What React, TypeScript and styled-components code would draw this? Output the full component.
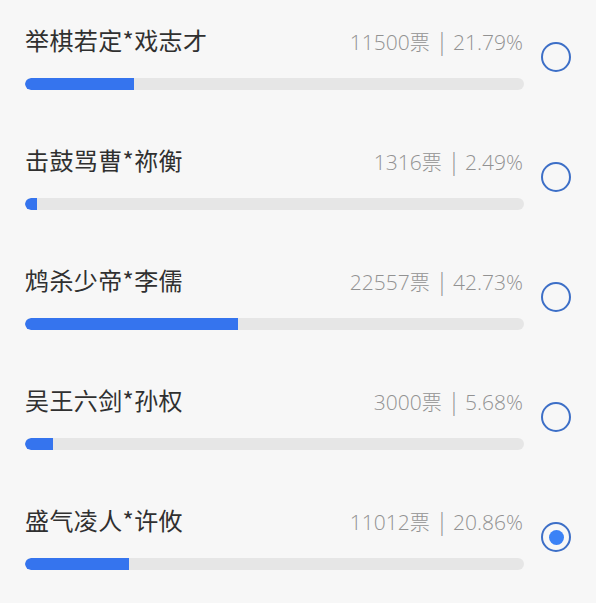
import React from "react"
import styled, { createGlobalStyle } from "styled-components"

const GlobalStyle = createGlobalStyle`
  html, body {
    margin: 0;
    padding: 0;
    background: #ffffff;
  }
`

type Option = {
  name: string
  votes: number
  percent: string
  selected?: boolean
}

const options: Option[] = [
  { name: "举棋若定*戏志才", votes: 11500, percent: "21.79" },
  { name: "击鼓骂曹*祢衡", votes: 1316, percent: "2.49" },
  { name: "鸩杀少帝*李儒", votes: 22557, percent: "42.73" },
  { name: "吴王六剑*孙权", votes: 3000, percent: "5.68" },
  { name: "盛气凌人*许攸", votes: 11012, percent: "20.86", selected: true },
]

const Panel = styled.div`
  width: 596px;
  height: 603px;
  background: #f7f7f7;
  font-family: "Noto Sans CJK SC", "Noto Sans", sans-serif;
  overflow: hidden;
`

const Row = styled.div`
  display: flex;
  align-items: center;
  height: 120px;
  box-sizing: border-box;
  padding: 24px 0 30px 25px;
`

const Body = styled.div`
  width: 499px;
  display: flex;
  flex-direction: column;
`

const Header = styled.div`
  display: flex;
  justify-content: space-between;
  align-items: baseline;
  height: 32px;
`

const Title = styled.div`
  font-size: 24px;
  line-height: 32px;
  color: #303030;
  letter-spacing: 0.4px;
`

const Stats = styled.div`
  display: flex;
  align-items: baseline;
  font-family: "Open Sans", "Noto Sans CJK SC", sans-serif;
  font-size: 21px;
  line-height: 32px;
  color: #929292;
  font-weight: 300;
  margin-right: 1px;
`

const Unit = styled.span`
  font-family: "Noto Sans CJK SC", sans-serif;
  font-size: 20px;
`

const Divider = styled.span`
  margin: 0 5px 0 6px;
  font-size: 23px;
`

const Track = styled.div`
  margin-top: 22px;
  height: 12px;
  border-radius: 6px;
  background: #e6e6e6;
  overflow: hidden;
`

const Fill = styled.div`
  height: 100%;
  background: #3574ee;
  border-radius: 6px 0 0 6px;
`

const Radio = styled.div<{ $checked?: boolean }>`
  margin-left: 17px;
  width: 30px;
  height: 30px;
  box-sizing: border-box;
  border: 2px solid #3d6fc7;
  border-radius: 50%;
  display: flex;
  align-items: center;
  justify-content: center;

  &::after {
    content: "";
    display: ${(p) => (p.$checked ? "block" : "none")};
    width: 15px;
    height: 15px;
    border-radius: 50%;
    background: #3b82f6;
  }
`

export default function App() {
  return (
    <>
      <GlobalStyle />
      <Panel>
        {options.map((o) => (
          <Row key={o.name}>
            <Body>
              <Header>
                <Title>{o.name}</Title>
                <Stats>
                  {o.votes}
                  <Unit>票</Unit>
                  <Divider>|</Divider>
                  {o.percent}%
                </Stats>
              </Header>
              <Track>
                <Fill style={{ width: `${o.percent}%` }} />
              </Track>
            </Body>
            <Radio $checked={o.selected} />
          </Row>
        ))}
      </Panel>
    </>
  )
}
